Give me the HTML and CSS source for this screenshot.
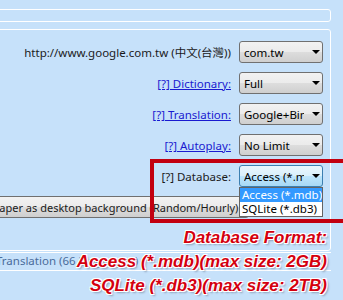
FILE: index.html
```
<!DOCTYPE html>
<html lang="en">
<head>
    <meta charset="UTF-8">
    <title>Options</title>
    <link rel="stylesheet" href="styles.css">
</head>
<body>
    <div class="page">
        <div class="bar"></div>

        <div class="panel">
            <div class="row">
                <span class="label">http://www.google.com.tw (中文(台灣))</span>
                <div class="select"><span class="value">com.tw</span><span class="arrow"></span></div>
            </div>
            <div class="row">
                <a class="link" href="#">[?] Dictionary:</a>
                <div class="select"><span class="value">Full</span><span class="arrow"></span></div>
            </div>
            <div class="row">
                <a class="link" href="#">[?] Translation:</a>
                <div class="select"><span class="value">Google+Bing</span><span class="arrow"></span></div>
            </div>
            <div class="row">
                <a class="link" href="#">[?] Autoplay:</a>
                <div class="select"><span class="value">No Limit</span><span class="arrow"></span></div>
            </div>
            <div class="row">
                <span class="label">[?] Database:</span>
                <div class="select focused">
                    <span class="value">Access (*.mdb)</span><span class="arrow"></span>
                    <ul class="dropdown">
                        <li class="active">Access (*.mdb)</li>
                        <li>SQLite (*.db3)</li>
                    </ul>
                </div>
            </div>
            <div class="button-row">
                <button class="wide-btn"><span class="btn-text">Set wallpaper as desktop background (Random/Hourly)</span></button>
            </div>
        </div>

        <div class="group">
            <span class="group-title">Translation (66 languages)</span>
        </div>
    </div>

    <!-- annotation drawn over the screenshot -->
    <div class="highlight"></div>
    <div class="note">
        <p>Database Format:</p>
        <p>Access (*.mdb)(max size: 2GB)</p>
        <p>SQLite (*.db3)(max size: 2TB)</p>
    </div>
</body>
</html>
```
FILE: styles.css
```
body {
    margin: 0;
    background-color: #c6e1fa;
    font-family: "Noto Sans", "Noto Sans CJK TC", sans-serif;
    font-size: 11.5px;
    color: #1a1a1a;
    overflow: hidden;
    height: 300px;
}

.page {
    padding-top: 9px;
    margin-right: 12px;
}

.bar {
    height: 11px;
    margin-left: -4px;
    border: 1px solid #fff;
    border-radius: 0 3px 3px 0;
}

.panel {
    margin-top: 7px;
    margin-left: -4px;
    height: 209px;
    padding-top: 11px;
    border: 1px solid #fff;
    border-radius: 0 3px 3px 0;
    display: flex;
    flex-direction: column;
    gap: 9px;
}

.row {
    display: flex;
    justify-content: flex-end;
    align-items: center;
    gap: 8px;
    padding-right: 7px;
}

.link {
    color: #1a1ad0;
    text-decoration: underline;
}

.select {
    position: relative;
    box-sizing: border-box;
    width: 84px;
    height: 22px;
    border: 1px solid #707070;
    border-radius: 3px;
    background: linear-gradient(#f2f2f2 0%, #ebebeb 50%, #dddddd 51%, #cfcfcf 100%);
    display: flex;
    align-items: center;
    padding-left: 4px;
}

.select.focused {
    border-color: #3c7fb1;
    background: linear-gradient(#eaf6fd 0%, #d9f0fc 50%, #bee6fd 51%, #a7d9f5 100%);
}

.value {
    width: 60px;
    overflow: hidden;
    white-space: nowrap;
    color: #000;
}

.arrow {
    margin-left: 8px;
    width: 0;
    height: 0;
    border-left: 4px solid transparent;
    border-right: 4px solid transparent;
    border-top: 4px solid #000;
}

.dropdown {
    position: absolute;
    top: 21px;
    left: -1px;
    width: 84px;
    box-sizing: border-box;
    margin: 0;
    padding: 0;
    list-style: none;
    background-color: #fff;
    border: 1px solid #646464;
    z-index: 2;
}

.dropdown li {
    height: 14px;
    line-height: 14px;
    padding-left: 2px;
    white-space: nowrap;
    overflow: hidden;
    color: #000;
}

.dropdown li.active {
    background-color: #3399ff;
    color: #fff;
}

.button-row {
    margin-left: -8px;
}

.wide-btn {
    width: 260px;
    height: 22px;
    font-family: inherit;
    font-size: 11px;
    color: #1a1a1a;
    text-align: left;
    white-space: nowrap;
    overflow: hidden;
    padding: 0;
    border: 1px solid #707070;
    border-radius: 3px;
    background: linear-gradient(#f2f2f2 0%, #ebebeb 50%, #dddddd 51%, #cfcfcf 100%);
}

.btn-text {
    display: inline-block;
    margin-left: -37px;
}

.group {
    margin-top: 1px;
    margin-left: -5px;
    height: 17px;
    border: 1px solid #fff;
    border-right: none;
}

.group-title {
    color: #4a6c9b;
    line-height: 16px;
}

.highlight {
    position: absolute;
    left: 150px;
    top: 159px;
    width: 200px;
    height: 56px;
    border: 4px solid #c20010;
}

.note {
    position: absolute;
    right: 16px;
    top: 226px;
    text-align: right;
    font-family: "Liberation Sans", Arial, sans-serif;
    font-size: 17px;
    font-weight: bold;
    font-style: italic;
    color: #d4000f;
    text-shadow: 1px 1px 0 #fff, -1px -1px 0 #fff, 1px -1px 0 #fff, -1px 1px 0 #fff, 2px 2px 2px #8aa0b8;
}

.note p {
    margin: 0;
    line-height: 24px;
}
```
